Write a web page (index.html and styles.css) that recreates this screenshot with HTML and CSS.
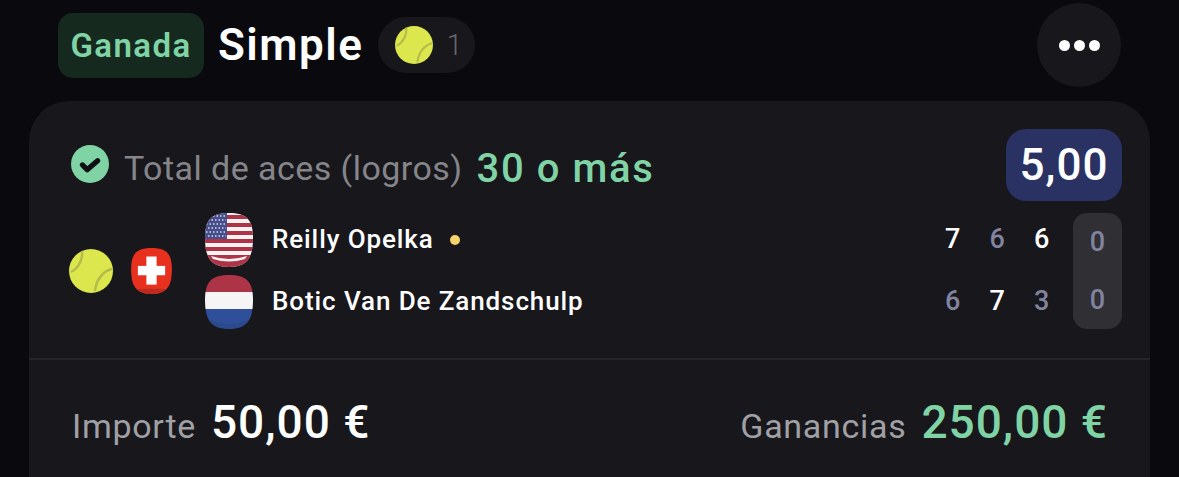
FILE: index.html
```html
<!DOCTYPE html>
<html lang="es">
<head>
  <meta charset="UTF-8" />
  <meta name="viewport" content="width=device-width, initial-scale=1" />
  <title>Ganada Simple</title>
  <link rel="stylesheet" href="styles.css">
</head>
<body>
  <svg class="defs" width="0" height="0">
    <defs>
      <symbol id="ball" viewBox="0 0 44 44">
        <circle cx="22" cy="22" r="22" fill="#dbe74c"/>
        <path d="M13 2C14 10 10 19 2 23" fill="none" stroke="#b6bc4b" stroke-width="2.500"/>
        <path d="M43 20C34 22 27 31 26 42" fill="none" stroke="#b6bc4b" stroke-width="2.500"/>
      </symbol>
      <clipPath id="blob">
        <path d="M24 0C41 0 48 6 48 25C48 46 41 54 24 54C7 54 0 46 0 25C0 6 7 0 24 0Z"/>
      </clipPath>
    </defs>
  </svg>

  <header class="top">
    <span class="badge">Ganada</span>
    <span class="title">Simple</span>
    <span class="count">
      <svg class="ball-sm"><use href="#ball"/></svg>
      <span class="count-num">1</span>
    </span>
    <button class="more"><i></i><i></i><i></i></button>
  </header>

  <section class="card">
    <div class="card-main">
      <div class="market">
        <div class="market-text">
          <svg class="check" viewBox="0 0 40 40">
            <circle cx="20" cy="20" r="20" fill="#7fd3a4"/>
            <path d="M12 21l5 5L28 16.500" fill="none" stroke="#101014" stroke-width="5.500" stroke-linecap="round" stroke-linejoin="round"/>
          </svg>
          <span class="market-name">Total de aces (logros)</span>
          <span class="market-pick">30 o más</span>
        </div>
        <span class="odds">5,00</span>
      </div>

      <div class="match">
        <svg class="ball-lg"><use href="#ball"/></svg>
        <svg class="swiss" viewBox="0 0 48 54">
          <g clip-path="url(#blob)">
            <rect width="48" height="54" fill="#e8301f"/>
            <rect y="48" width="48" height="6" fill="#bd2a1e"/>
            <rect x="18" y="10" width="12" height="33" fill="#fff"/>
            <rect x="8" y="21" width="32" height="11" fill="#fff"/>
          </g>
        </svg>

        <div class="players">
          <div class="player">
            <svg class="flag" viewBox="0 0 48 54">
              <g clip-path="url(#blob)">
                <rect width="48" height="54" fill="#f4f2f2"/>
                <path d="M0 2h48v4H0zM0 10h48v4H0zM0 18h48v4H0zM0 26h48v4H0zM0 34h48v4H0zM0 42h48v12H0z" fill="#ad3346"/>
                <path d="M6 43Q24 49 42 43L40 46Q24 51 8 46Z" fill="#f4f2f2"/>
                <rect width="22" height="26" fill="#454f8c"/>
                <path d="M1 3h20M3 7h18M1 11h20M3 15h18M1 19h20M3 23h18" stroke="#d7d8e6" stroke-width="1.500" stroke-dasharray="1.500 2"/>
              </g>
            </svg>
            <span class="player-name">Reilly Opelka</span>
            <i class="serve"></i>
            <div class="sets">
              <span class="on">7</span><span>6</span><span class="on">6</span>
            </div>
          </div>
          <div class="player">
            <svg class="flag" viewBox="0 0 48 54">
              <g clip-path="url(#blob)">
                <rect width="48" height="17" fill="#ad3346"/>
                <rect y="17" width="48" height="17" fill="#f6f4f4"/>
                <rect y="34" width="48" height="20" fill="#2f4f9a"/>
                <path d="M0 42Q24 56 48 42V54H0Z" fill="#28447f" opacity="0.500"/>
              </g>
            </svg>
            <span class="player-name">Botic Van De Zandschulp</span>
            <div class="sets">
              <span>6</span><span class="on">7</span><span>3</span>
            </div>
          </div>
          <div class="points"><span>0</span><span>0</span></div>
        </div>
      </div>
    </div>

    <footer class="totals">
      <div class="total">
        <span class="total-label">Importe</span>
        <span class="total-value">50,00 €</span>
      </div>
      <div class="total">
        <span class="total-label">Ganancias</span>
        <span class="total-value won">250,00 €</span>
      </div>
    </footer>
  </section>
</body>
</html>
```

FILE: styles.css
```css
* {
  box-sizing: border-box;
}

html, body {
  height: 100%;
}

body {
  margin: 0;
  background: #09090e;
  color: #fff;
  font-family: Roboto, "Noto Sans", sans-serif;
  overflow: hidden;
}

.defs {
  display: block;
  height: 0;
}

.top {
  display: flex;
  align-items: center;
  height: 101px;
  padding: 2px 58px 13px 58px;
}

.badge {
  display: flex;
  align-items: center;
  justify-content: center;
  width: 146px;
  height: 65px;
  border-radius: 15px;
  background: #15291f;
  color: #7fd3a4;
  font-size: 33px;
  font-weight: 600;
  letter-spacing: 1.400px;
}

.title {
  margin-left: 14px;
  font-size: 44px;
  font-weight: 600;
  letter-spacing: 1.500px;
}

.count {
  display: flex;
  align-items: center;
  width: 97px;
  height: 56px;
  margin-left: 15px;
  padding-left: 17px;
  border-radius: 28px;
  background: #17171c;
}

.ball-sm {
  width: 38px;
  height: 38px;
}

.count-num {
  margin-left: 13px;
  color: #66666b;
  font-size: 29px;
  font-weight: 300;
}

.more {
  display: flex;
  align-items: center;
  justify-content: center;
  gap: 4px;
  width: 84px;
  height: 84px;
  margin-left: auto;
  padding: 0;
  border: none;
  border-radius: 50%;
  background: #17171c;
}

.more i {
  width: 11px;
  height: 11px;
  border-radius: 50%;
  background: #fff;
}

.card {
  height: 376px;
  margin: 0 29px;
  border-radius: 40px 40px 0 0;
  background: #17171c;
}

.card-main {
  height: 259px;
  padding: 28px 28px 0 42px;
  border-bottom: 2px solid #24252b;
}

.market {
  display: flex;
  align-items: center;
  justify-content: space-between;
}

.market-text {
  display: flex;
  align-items: center;
}

.check {
  width: 38px;
  height: 38px;
  margin-top: -2px;
}

.market-name {
  margin-left: 15px;
  padding-top: 6px;
  color: #85858a;
  font-size: 34px;
  font-weight: 400;
  letter-spacing: 0.450px;
}

.market-pick {
  margin-left: 14px;
  padding-top: 6px;
  color: #7fd3a4;
  font-size: 40px;
  font-weight: 500;
  letter-spacing: 1.600px;
}

.odds {
  display: flex;
  align-items: center;
  justify-content: center;
  width: 116px;
  height: 72px;
  border-radius: 20px;
  background: #2a3163;
  font-size: 44px;
  font-weight: 500;
  letter-spacing: 1px;
}

.match {
  display: flex;
  align-items: center;
  margin-top: 12px;
}

.ball-lg {
  width: 44px;
  height: 44px;
  margin-left: -2px;
}

.swiss {
  width: 41px;
  height: 46px;
  margin-left: 18px;
}

.players {
  position: relative;
  flex: 1;
  margin-left: 33px;
}

.player {
  display: flex;
  align-items: center;
  height: 54px;
  padding-right: 58px;
}

.player + .player {
  margin-top: 8px;
}

.flag {
  width: 48px;
  height: 54px;
}

.player-name {
  margin-bottom: 2px;
  margin-left: 19px;
  font-size: 26px;
  font-weight: 500;
  letter-spacing: 0.900px;
}

.serve {
  width: 10px;
  height: 10px;
  margin-left: 16px;
  border-radius: 50%;
  background: #f5d26b;
}

.sets {
  display: flex;
  margin-bottom: 2px;
  margin-left: auto;
  color: #81849f;
  font-size: 27px;
  font-weight: 500;
}

.sets span {
  width: 44.500px;
  text-align: center;
}

.sets .on {
  color: #fff;
}

.points {
  position: absolute;
  top: 0;
  right: 0;
  bottom: 0;
  display: flex;
  flex-direction: column;
  justify-content: space-around;
  width: 49px;
  border-radius: 14px;
  background: #2f2f34;
  color: #81849f;
  font-size: 27px;
  font-weight: 500;
  text-align: center;
}

.totals {
  display: flex;
  align-items: center;
  justify-content: space-between;
  height: 115px;
  padding: 8px 42px 0 43px;
}

.total {
  display: flex;
  align-items: baseline;
  gap: 15px;
}

.total-label {
  color: #a0a0a5;
  font-size: 34px;
  font-weight: 400;
  letter-spacing: 0.700px;
}

.total-value {
  font-size: 46px;
  font-weight: 500;
  letter-spacing: 1px;
}

.won {
  color: #7fd3a4;
}
```
